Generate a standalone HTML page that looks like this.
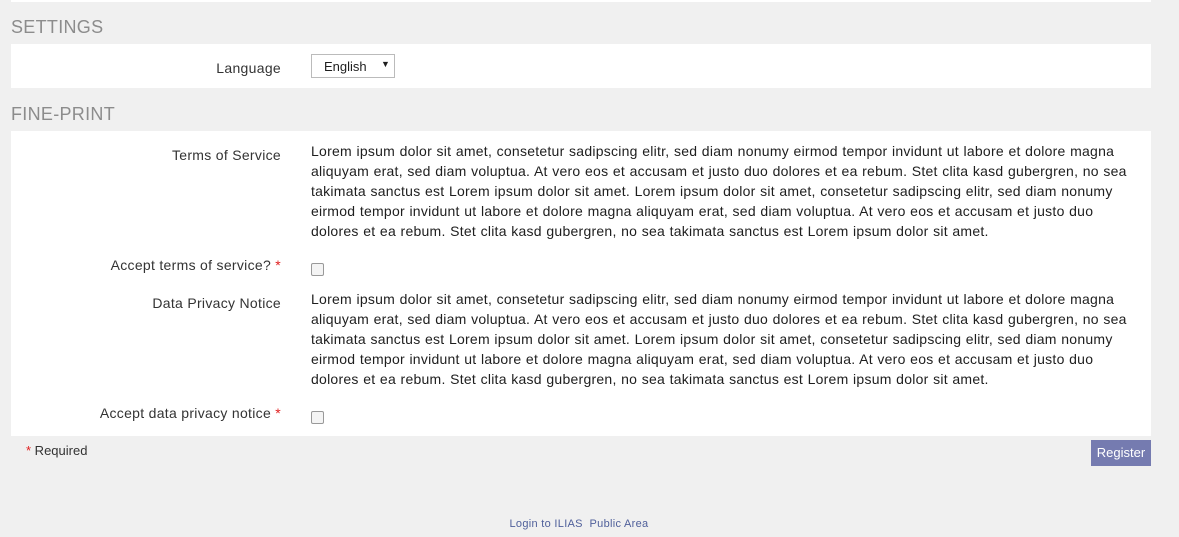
<!DOCTYPE html>
<html><head><style>
body{margin:0;width:1179px;height:537px;background:#f0f0f0;font-family:"Liberation Sans",sans-serif;color:#1e1e1e;position:relative;overflow:hidden;font-size:14px}
.abs{position:absolute}
.panel{position:absolute;left:11px;width:1140px;background:#fff}
h2{position:absolute;left:11px;margin:0;font-weight:normal;font-size:18px;color:#8c8c8c;letter-spacing:0.3px}
.lbl{position:absolute;right:898px;text-align:right;white-space:nowrap;color:#333;letter-spacing:0.3px}
.txt{position:absolute;left:311px;line-height:20px;white-space:nowrap;letter-spacing:0.25px;word-spacing:0.4px}
.cb{position:absolute;left:311px;width:11px;height:11px;border:1px solid #999;border-radius:2px;background:#f4f4f4}
.req{color:#e02020}
</style></head><body>
<div class="panel" style="top:0;height:2px"></div>
<h2 style="top:17px">SETTINGS</h2>
<div class="panel" style="top:44px;height:44px"></div>
<div class="lbl" style="top:60px">Language</div>
<div class="abs" style="left:311px;top:54px;width:82px;height:22px;border:1px solid #bbb;background:#fff;font-size:13px"><span class="abs" style="left:12px;top:4px">English</span><span class="abs" style="left:69px;top:4px;font-size:9px">▼</span></div>
<h2 style="top:104px">FINE-PRINT</h2>
<div class="panel" style="top:131px;height:305px"></div>
<div class="lbl" style="top:147px">Terms of Service</div>
<div class="txt" style="top:141px">Lorem ipsum dolor sit amet, consetetur sadipscing elitr, sed diam nonumy eirmod tempor invidunt ut labore et dolore magna<br>aliquyam erat, sed diam voluptua. At vero eos et accusam et justo duo dolores et ea rebum. Stet clita kasd gubergren, no sea<br>takimata sanctus est Lorem ipsum dolor sit amet. Lorem ipsum dolor sit amet, consetetur sadipscing elitr, sed diam nonumy<br>eirmod tempor invidunt ut labore et dolore magna aliquyam erat, sed diam voluptua. At vero eos et accusam et justo duo<br>dolores et ea rebum. Stet clita kasd gubergren, no sea takimata sanctus est Lorem ipsum dolor sit amet.</div>
<div class="lbl" style="top:257px">Accept terms of service? <span class="req">*</span></div>
<div class="cb" style="top:263px"></div>
<div class="lbl" style="top:295px">Data Privacy Notice</div>
<div class="txt" style="top:289px">Lorem ipsum dolor sit amet, consetetur sadipscing elitr, sed diam nonumy eirmod tempor invidunt ut labore et dolore magna<br>aliquyam erat, sed diam voluptua. At vero eos et accusam et justo duo dolores et ea rebum. Stet clita kasd gubergren, no sea<br>takimata sanctus est Lorem ipsum dolor sit amet. Lorem ipsum dolor sit amet, consetetur sadipscing elitr, sed diam nonumy<br>eirmod tempor invidunt ut labore et dolore magna aliquyam erat, sed diam voluptua. At vero eos et accusam et justo duo<br>dolores et ea rebum. Stet clita kasd gubergren, no sea takimata sanctus est Lorem ipsum dolor sit amet.</div>
<div class="lbl" style="top:405px">Accept data privacy notice <span class="req">*</span></div>
<div class="cb" style="top:411px"></div>
<div class="abs" style="left:26px;top:443px;font-size:13px;color:#333"><span class="req">*</span> Required</div>
<div class="abs" style="left:1091px;top:440px;width:60px;height:26px;background:#757bb0;color:#fff;font-size:13px;text-align:center;line-height:26px">Register</div>
<div class="abs" style="left:0;top:518px;width:1158px;text-align:center;font-size:11px;color:#4f5f9a;letter-spacing:0.3px">Login to ILIAS&nbsp;&nbsp;Public Area</div>
</body></html>
